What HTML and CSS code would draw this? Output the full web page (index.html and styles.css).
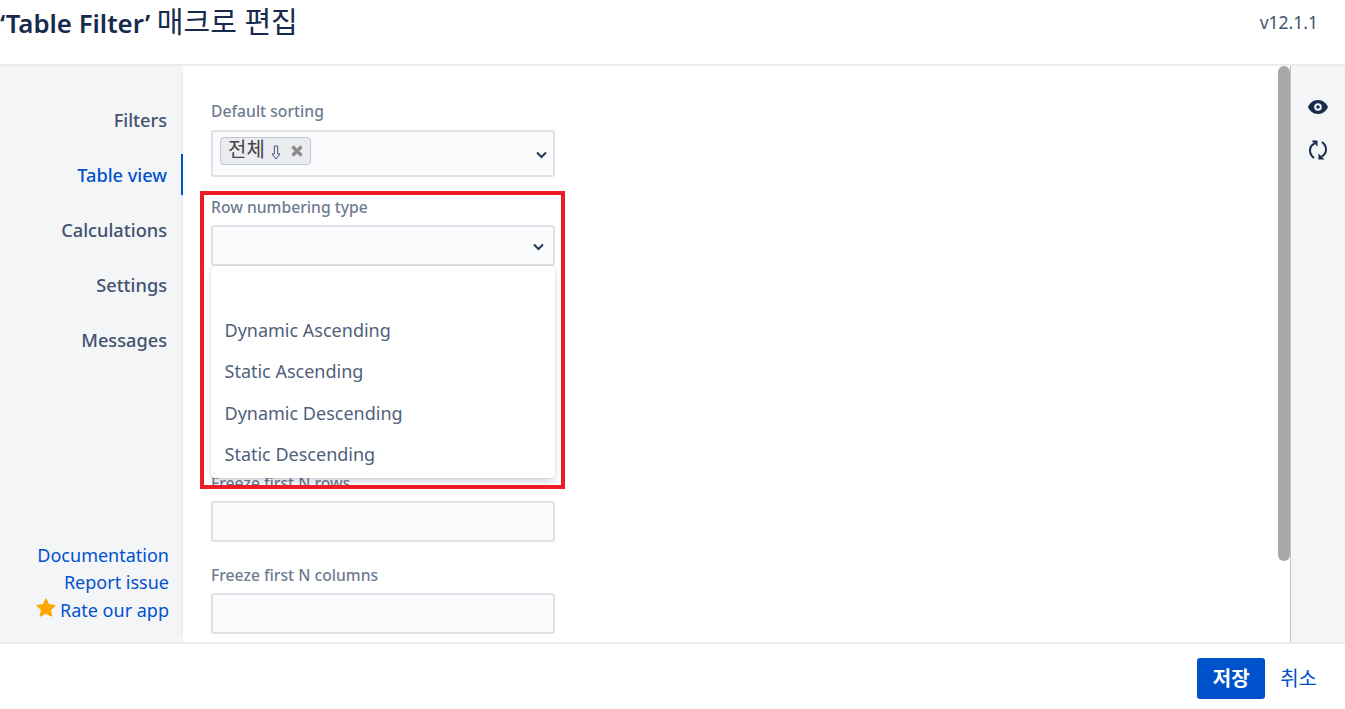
FILE: index.html
```html
<!DOCTYPE html>
<html lang="ko">
<head>
<meta charset="utf-8">
<title>Table Filter</title>
<link rel="stylesheet" href="styles.css">
</head>
<body>
<div class="app">
  <header class="head">
    <h1 class="title"><span class="title-strong">‘Table Filter’</span> <span class="title-ko">매크로 편집</span></h1>
    <span class="version">v12.1.1</span>
  </header>
  <div class="body">
    <aside class="side">
      <div class="side-inner">
        <nav class="nav">
          <a class="nav-item">Filters</a>
          <a class="nav-item active">Table view</a>
          <a class="nav-item">Calculations</a>
          <a class="nav-item">Settings</a>
          <a class="nav-item">Messages</a>
        </nav>
        <div class="links">
          <a class="link">Documentation</a>
          <a class="link">Report issue</a>
          <a class="link"><svg class="star" viewBox="0 0 20 20"><path d="M10 1.200l2.700 5.600 6.100.8-4.500 4.200 1.200 6.100L10 15l-5.500 2.900 1.200-6.100L1.200 7.600l6.100-.8z" fill="#ffa500" stroke="#ffa500" stroke-width="1.400" stroke-linejoin="round"/></svg>Rate our app</a>
        </div>
      </div>
    </aside>
    <main class="main">
      <form class="form">
        <div class="field first">
          <label class="label">Default sorting</label>
          <div class="control tall">
            <span class="tag"><span class="tag-text">전체</span><svg class="tag-arrow" viewBox="0 0 10 15"><path d="M3.300 1h3.400v8h2.300L5 14 1 9h2.300z" fill="none" stroke="#42526e" stroke-width="1"/></svg><svg class="tag-x" viewBox="0 0 12 12"><path d="M1.500 1.500l9 9M10.500 1.500l-9 9" stroke="#8a8a8a" stroke-width="3.200"/></svg></span>
            <svg class="chev" viewBox="0 0 12 8"><path d="M1.500 1.500L6 6l4.500-4.500" fill="none" stroke="#253858" stroke-width="2"/></svg>
          </div>
        </div>
        <div class="field row-type">
          <label class="label">Row numbering type</label>
          <div class="control">
            <svg class="chev chev-open" viewBox="0 0 12 8"><path d="M1.500 1.500L6 6l4.500-4.500" fill="none" stroke="#253858" stroke-width="2"/></svg>
          </div>
          <ul class="menu">
            <li class="opt blank"></li>
            <li class="opt">Dynamic Ascending</li>
            <li class="opt">Static Ascending</li>
            <li class="opt">Dynamic Descending</li>
            <li class="opt">Static Descending</li>
          </ul>
          <div class="highlight"></div>
        </div>
        <div class="field freeze-rows">
          <label class="label">Freeze first N rows</label>
          <div class="control"></div>
        </div>
        <div class="field freeze-cols">
          <label class="label">Freeze first N columns</label>
          <div class="control"></div>
        </div>
      </form>
    </main>
    <div class="scroll"><div class="thumb"></div></div>
    <aside class="tools">
      <svg class="tool eye" viewBox="0 0 22 16"><path fill-rule="evenodd" fill="#172b4d" d="M11 1c5 0 8.700 3.600 10 7-1.300 3.400-5 7-10 7S2.300 11.400 1 8c1.300-3.400 5-7 10-7zm0 3.200A3.800 3.800 0 1 0 11 11.800 3.800 3.800 0 0 0 11 4.200zM11 6.200a1.800 1.800 0 1 1 0 3.600 1.800 1.800 0 0 1 0-3.600z"/></svg>
      <svg class="tool sync" viewBox="0 0 22 22"><path d="M7.500 4.500C4.500 6 3 8.500 3 11.500c0 3 1.500 5.500 4 7.500M14.500 17.500c3-1.500 4.500-4 4.500-7 0-3-1.500-5.500-4-7.500" fill="none" stroke="#172b4d" stroke-width="2"/><path d="M4.500 1.500h6v6zM17.500 20.500h-6v-6z" fill="#172b4d"/></svg>
    </aside>
  </div>
  <footer class="foot">
    <button class="save" type="button">저장</button>
    <a class="cancel">취소</a>
  </footer>
</div>
</body>
</html>
```
FILE: styles.css
```css
* { box-sizing: border-box; }
html, body { margin: 0; height: 100%; overflow: hidden; background: #fff; }
body { font-family: "Noto Sans", "Noto Sans CJK KR", sans-serif; color: #172b4d; }
.app { height: 709px; display: flex; flex-direction: column; }

.head { height: 66px; flex: none; border-bottom: 2px solid #ebecf0; display: flex; justify-content: space-between; padding: 4px 27px 0 0; }
.title { margin: 0; font-size: 25.800px; line-height: 36px; font-weight: 400; color: #172b4d; }
.title-strong { font-weight: 600; }
.title-ko { font-size: 29px; }
.version { font-size: 17.500px; line-height: 36px; color: #42526e; }

.body { flex: 1; min-height: 0; display: flex; }

.side { width: 183px; flex: none; background: #f4f5f7; padding: 6px 0 7px; display: flex; }
.side-inner { flex: 1; min-width: 0; border-right: 2px solid #ebecf0; display: flex; flex-direction: column; justify-content: space-between; padding-bottom: 11px; }
.nav { display: flex; flex-direction: column; gap: 14px; padding-top: 27px; }
.nav-item { height: 41px; line-height: 43px; padding-right: 14px; text-align: right; font-size: 18.200px; font-weight: 500; color: #42526e; }
.nav-item.active { color: #0052cc; border-right: 2px solid #0052cc; margin-right: -2px; }
.links { display: flex; flex-direction: column; align-items: flex-end; padding-right: 12px; }
.link { font-size: 18px; line-height: 27.500px; color: #0052cc; display: flex; align-items: center; }
.star { width: 20px; height: 20px; margin-right: 4px; margin-top: -4px; }

.main { flex: 1; min-width: 0; overflow: hidden; padding-left: 28px; }
.form { width: 344px; display: flex; flex-direction: column; padding-top: 35px; }
.field { position: relative; }
.label { display: block; font-size: 15.700px; line-height: 20px; font-weight: 500; color: #6f7b91; margin-bottom: 8px; }
.first .label { margin-bottom: 9px; }
.control { height: 41px; background: #fafbfc; border: 2px solid #dfe1e6; border-radius: 3px; position: relative; display: flex; align-items: center; padding-left: 7px; }
.control.tall { height: 47px; align-items: flex-start; padding-top: 5px; }
.row-type { margin-top: 20px; }
.freeze-rows { margin-top: 207px; }
.freeze-cols { margin-top: 23px; }
.chev { position: absolute; right: 5px; top: 50%; width: 13px; height: 8px; margin-top: -3px; }
.chev-open { right: 8px; }

.tag { display: inline-flex; align-items: center; height: 28px; padding: 0 7px 0 7px; background: #ebecf0; border: 1px solid #c1c7d0; border-radius: 4px; }
.tag-text { font-size: 20px; line-height: 24px; color: #444; margin-top: -3px; }
.tag-arrow { width: 10px; height: 15px; margin-left: 6px; margin-top: 2px; }
.tag-x { width: 12px; height: 12px; margin-left: 10px; }

.menu { position: absolute; left: 0; top: 69px; width: 344px; height: 212px; margin: 0; padding: 0; list-style: none; background: #fff; border-radius: 4px; box-shadow: 0 4px 8px -2px rgba(9,30,66,.25), 0 0 1px rgba(9,30,66,.31); z-index: 2; }
.opt { height: 41.330px; line-height: 41px; padding-left: 13.500px; font-size: 18px; color: #505f7b; }
.opt.blank { height: 44px; }
.highlight { position: absolute; left: -11px; top: -6px; width: 365px; height: 298px; border: 4px solid #ed1c24; z-index: 3; pointer-events: none; }

.scroll { width: 12px; flex: none; }
.thumb { height: 495px; background: #a8a8a8; border-radius: 6px; }
.tools { width: 55px; flex: none; background: #f4f5f7; border-left: 1px solid #c1c1c1; display: flex; flex-direction: column; align-items: center; padding-top: 33px; }
.tool.eye { width: 22px; height: 16px; }
.tool.sync { width: 22px; height: 22px; margin-top: 24px; }

.foot { height: 67px; flex: none; border-top: 2px solid #ebecf0; display: flex; align-items: flex-start; justify-content: flex-end; padding: 14px 28px 0 0; gap: 15px; }
.save { width: 68px; height: 41px; border: 0; border-radius: 3px; background: #0052cc; color: #fff; font: 700 20px/41px "Noto Sans", "Noto Sans CJK KR", sans-serif; padding: 0; }
.cancel { font-size: 20px; line-height: 41px; color: #0052cc; }
```
